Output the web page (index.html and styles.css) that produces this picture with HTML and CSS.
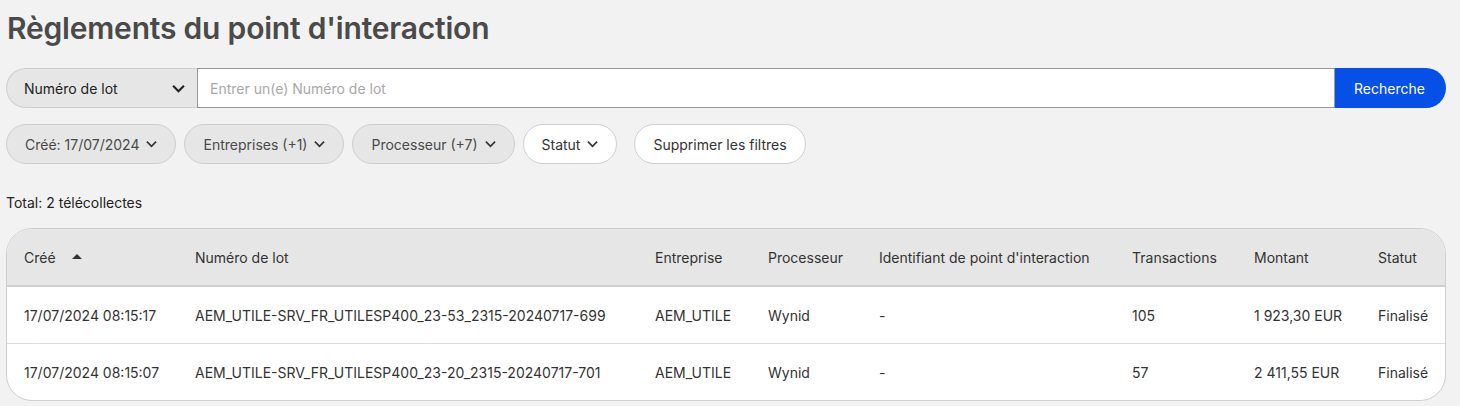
FILE: index.html
```html
<!DOCTYPE html>
<html lang="fr">
<head>
  <meta charset="UTF-8">
  <title>Règlements du point d'interaction</title>
  <link rel="stylesheet" href="styles.css">
</head>
<body>
  <h1 class="title">Règlements du point d'interaction</h1>

  <!-- Search bar -->
  <div class="search">
    <div class="search-select">
      <span>Numéro de lot</span>
      <svg class="chev chev-big" viewBox="0 0 12 8"><path d="M1 1.5l5 5 5-5" /></svg>
    </div>
    <div class="search-input">Entrer un(e) Numéro de lot</div>
    <button class="search-btn">Recherche</button>
  </div>

  <!-- Filters -->
  <div class="filters">
    <div class="chip chip-on">Créé: 17/07/2024 <svg class="chev" viewBox="0 0 12 8"><path d="M1 1.5l5 5 5-5" /></svg></div>
    <div class="chip chip-on">Entreprises (+1) <svg class="chev" viewBox="0 0 12 8"><path d="M1 1.5l5 5 5-5" /></svg></div>
    <div class="chip chip-on">Processeur (+7) <svg class="chev" viewBox="0 0 12 8"><path d="M1 1.5l5 5 5-5" /></svg></div>
    <div class="chip">Statut <svg class="chev" viewBox="0 0 12 8"><path d="M1 1.5l5 5 5-5" /></svg></div>
    <div class="chip chip-clear">Supprimer les filtres</div>
  </div>

  <div class="total">Total: 2 télécollectes</div>

  <!-- Table -->
  <div class="table-wrap">
    <table class="grid">
      <colgroup>
        <col style="width:171px"><col style="width:460px"><col style="width:113px"><col style="width:111px">
        <col style="width:253px"><col style="width:122px"><col style="width:124px"><col style="width:86px">
      </colgroup>
      <thead>
        <tr>
          <th>Créé <span class="sort"></span></th>
          <th>Numéro de lot</th>
          <th>Entreprise</th>
          <th>Processeur</th>
          <th>Identifiant de point d'interaction</th>
          <th>Transactions</th>
          <th>Montant</th>
          <th>Statut</th>
        </tr>
      </thead>
      <tbody>
        <tr>
          <td>17/07/2024 08:15:17</td>
          <td>AEM_UTILE-SRV_FR_UTILESP400_23-53_2315-20240717-699</td>
          <td>AEM_UTILE</td>
          <td>Wynid</td>
          <td>-</td>
          <td>105</td>
          <td>1 923,30 EUR</td>
          <td>Finalisé</td>
        </tr>
        <tr>
          <td>17/07/2024 08:15:07</td>
          <td>AEM_UTILE-SRV_FR_UTILESP400_23-20_2315-20240717-701</td>
          <td>AEM_UTILE</td>
          <td>Wynid</td>
          <td>-</td>
          <td>57</td>
          <td>2 411,55 EUR</td>
          <td>Finalisé</td>
        </tr>
      </tbody>
    </table>
  </div>
</body>
</html>
```

FILE: styles.css
```css
body {
  margin: 0;
  padding: 0 14px 0 6px;
  background-color: #f2f2f2;
  font-family: Inter, "Liberation Sans", sans-serif;
  color: #333;
  font-size: 14px;
}

.title {
  margin: 0;
  padding: 10px 0 0 1px;
  height: 68px;
  box-sizing: border-box;
  font-size: 30px;
  font-weight: 600;
  color: #4a4a4a;
  letter-spacing: -0.2px;
}

/* Search bar */
.search {
  display: flex;
  height: 40px;
}

.search-select {
  width: 191px;
  box-sizing: border-box;
  display: flex;
  align-items: center;
  justify-content: space-between;
  padding: 0 12px 0 17px;
  background-color: #e6e6e6;
  border: 1px solid #cfcfcf;
  border-right: none;
  border-radius: 20px 0 0 20px;
  color: #222;
}

.search-input {
  flex: 1;
  display: flex;
  align-items: center;
  padding-left: 12px;
  background: #fff;
  border: 1px solid #9a9a9a;
  color: #a8a8a8;
}

.search-btn {
  width: 111px;
  border: none;
  background-color: #0550e6;
  color: #fff;
  font-family: inherit;
  font-size: 14px;
  border-radius: 0 20px 20px 0;
  padding-right: 8px;
}

.chev {
  width: 11px;
  height: 8px;
  fill: none;
  stroke: #333;
  stroke-width: 1.8;
}

.chev-big {
  width: 13px;
  height: 9px;
  stroke: #222;
  stroke-width: 2;
}

/* Filters */
.filters {
  display: flex;
  gap: 8px;
  margin-top: 16px;
  height: 40px;
}

.chip {
  display: flex;
  align-items: center;
  gap: 7px;
  padding: 0 18px;
  border: 1px solid #cfcfcf;
  border-radius: 20px;
  background: #fff;
  color: #333;
}

.chip-on {
  background-color: #e6e6e6;
  color: #4a4a4a;
}

.chip-clear {
  margin-left: 9px;
}

.total {
  margin-top: 30px;
  font-size: 14px;
  color: #222;
}

/* Table */
.table-wrap {
  margin-top: 17px;
  border: 1px solid #cfcfcf;
  border-radius: 26px;
  overflow: hidden;
  background: #fff;
}

.grid {
  width: 100%;
  table-layout: fixed;
  border-collapse: collapse;
}

.grid th {
  height: 56px;
  background-color: #e6e6e6;
  border-bottom: 2px solid #cfcfcf;
  text-align: left;
  font-weight: 400;
  padding: 0 0 0 17px;
  color: #333;
}

.grid td {
  height: 56px;
  padding: 0 0 0 17px;
  border-top: 1px solid #ddd;
  white-space: nowrap;
  color: #333;
}

.grid tbody tr:first-child td {
  border-top: none;
}

.sort {
  display: inline-block;
  margin-left: 12px;
  vertical-align: 4px;
  border-left: 5px solid transparent;
  border-right: 5px solid transparent;
  border-bottom: 5px solid #333;
}
```
